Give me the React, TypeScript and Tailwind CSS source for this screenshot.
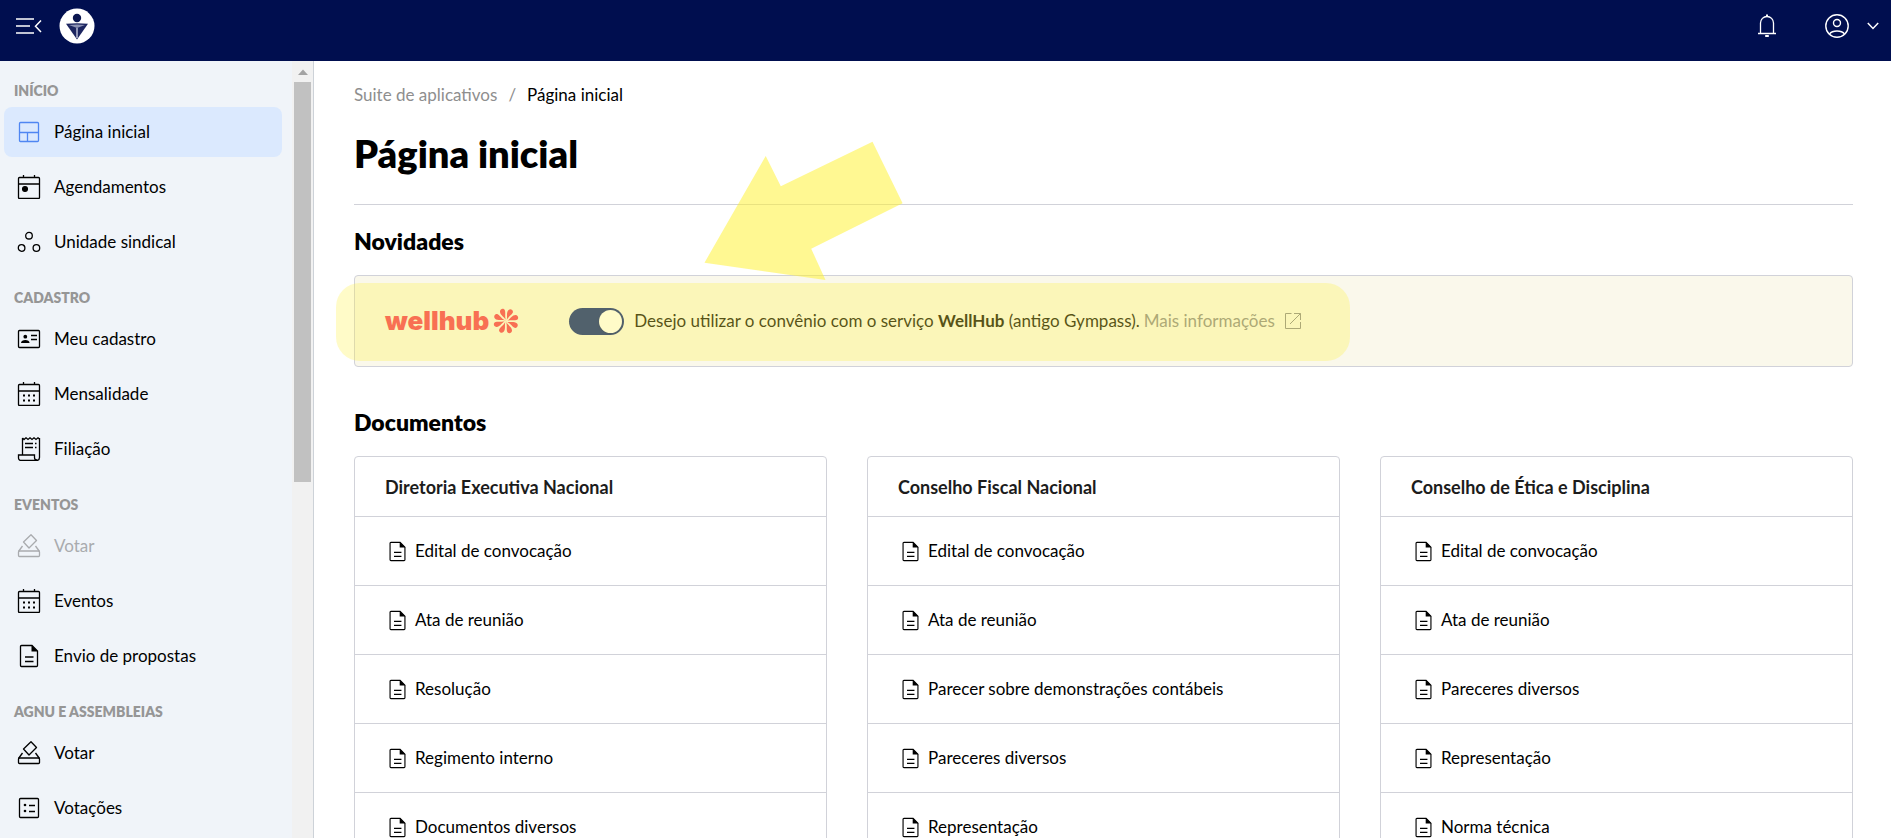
import { useState } from 'react';
import type { ReactNode } from 'react';

type IconName = 'home' | 'schedule' | 'unit' | 'idCard' | 'calendar' | 'receipt' | 'vote' | 'doc' | 'list';

const iconPaths: Record<IconName, ReactNode> = {
  home: (
    <>
      <rect x="2.5" y="2.5" width="19" height="19" rx="1" />
      <path d="M2.5 12.5h19M10.5 12.5v9" />
    </>
  ),
  schedule: (
    <>
      <rect x="1.5" y="2.5" width="21" height="21" rx="1" />
      <path d="M6.5 0v2.5M17.5 0v2.5M1.5 9h21" />
      <circle cx="8" cy="14" r="2.4" fill="currentColor" />
    </>
  ),
  unit: (
    <>
      <circle cx="12" cy="5.7" r="3.3" />
      <circle cx="4.6" cy="18" r="3.3" />
      <circle cx="19.4" cy="18" r="3.3" />
    </>
  ),
  idCard: (
    <>
      <rect x="1.5" y="3.5" width="21" height="17" rx="1" />
      <circle cx="8.3" cy="9.7" r="1.9" fill="currentColor" stroke="none" />
      <path d="M4 16c0-2 2-3 4.3-3s4.3 1 4.3 3z" fill="currentColor" stroke="none" />
      <path d="M14 8.5h6M14 12.5h6" />
    </>
  ),
  calendar: (
    <>
      <rect x="1.5" y="2.5" width="21" height="21" rx="1" />
      <path d="M6.5 0v2.5M17.5 0v2.5M1.5 9h21" />
      <path d="M6 13.5h2M11 13.5h2M16 13.5h2M6 18.5h2M11 18.5h2M16 18.5h2" strokeWidth="2" />
    </>
  ),
  receipt: (
    <>
      <path d="M5.5 18V1M22.5 1v19.5a3 3 0 0 1-3 3H4a2.5 2.5 0 0 1-2.5-2.5v-3h16v2.5a2.5 2.5 0 0 0 2.5 2.5" />
      <path d="M5.5 1l1.5 1.5L9 .8l2 1.7L13 .8l2 1.7L17 .8l2 1.7L21 .8l1.5 1.2" />
      <path d="M8 6.5h8M8 10.5h8M18 6.5h1.5M18 10.5h1.5" />
    </>
  ),
  vote: (
    <>
      <path d="M14 .8l5.5 5.7-7.5 7.5-5.5-6z" strokeLinejoin="round" />
      <rect x="1.5" y="17" width="21" height="5.5" rx="1" />
      <path d="M1.5 17.5l4-5.5M22.5 17.5l-4-5.5" />
    </>
  ),
  doc: (
    <>
      <path d="M15 1.5H4.5a1 1 0 0 0-1 1v19a1 1 0 0 0 1 1h15a1 1 0 0 0 1-1V7z" />
      <path d="M14.5 1v6.5H21z" fill="currentColor" stroke="none" />
      <path d="M8 13h8.5M8 17.5h8.5" />
    </>
  ),
  list: (
    <>
      <rect x="2.5" y="2.5" width="19" height="19" rx="1" />
      <path d="M12 9.5h6M12 15.5h6" />
      <circle cx="8" cy="9" r="1.3" fill="currentColor" stroke="none" />
      <circle cx="8" cy="15" r="1.3" fill="currentColor" stroke="none" />
    </>
  ),
};

function Icon({ name, className }: { name: IconName; className: string }) {
  return (
    <svg viewBox="0 0 24 24" fill="none" stroke="currentColor" strokeWidth="1.3" className={className} aria-hidden="true">
      {iconPaths[name]}
    </svg>
  );
}

type MenuItem = { label: string; icon: IconName; active?: boolean; disabled?: boolean };

const menu: { title: string; items: MenuItem[] }[] = [
  {
    title: 'INÍCIO',
    items: [
      { label: 'Página inicial', icon: 'home', active: true },
      { label: 'Agendamentos', icon: 'schedule' },
      { label: 'Unidade sindical', icon: 'unit' },
    ],
  },
  {
    title: 'CADASTRO',
    items: [
      { label: 'Meu cadastro', icon: 'idCard' },
      { label: 'Mensalidade', icon: 'calendar' },
      { label: 'Filiação', icon: 'receipt' },
    ],
  },
  {
    title: 'EVENTOS',
    items: [
      { label: 'Votar', icon: 'vote', disabled: true },
      { label: 'Eventos', icon: 'calendar' },
      { label: 'Envio de propostas', icon: 'doc' },
    ],
  },
  {
    title: 'AGNU E ASSEMBLEIAS',
    items: [
      { label: 'Votar', icon: 'vote' },
      { label: 'Votações', icon: 'list' },
    ],
  },
];

const documents = [
  {
    title: 'Diretoria Executiva Nacional',
    items: ['Edital de convocação', 'Ata de reunião', 'Resolução', 'Regimento interno', 'Documentos diversos'],
  },
  {
    title: 'Conselho Fiscal Nacional',
    items: ['Edital de convocação', 'Ata de reunião', 'Parecer sobre demonstrações contábeis', 'Pareceres diversos', 'Representação'],
  },
  {
    title: 'Conselho de Ética e Disciplina',
    items: ['Edital de convocação', 'Ata de reunião', 'Pareceres diversos', 'Representação', 'Norma técnica'],
  },
];

function Header() {
  return (
    <header className="flex h-[61px] shrink-0 items-start justify-between bg-[#000e4f] pt-2 pr-3 pl-4 text-white">
      <div className="flex items-center gap-4">
        <button type="button" aria-label="Menu" className="flex h-9 items-center">
          <svg width="27" height="18" viewBox="0 0 27 18" fill="none" stroke="currentColor" strokeWidth="1.5">
            <path d="M0 2h18M0 9h14M0 16h18M25 3.5L19.5 9.2l5.5 5.7" />
          </svg>
        </button>
        <a href="#" aria-label="Início">
          <svg width="36" height="36" viewBox="0 0 36 36">
            <circle cx="18" cy="18" r="17.5" fill="#fff" />
            <circle cx="18" cy="10" r="4.2" fill="#0b1650" />
            <path d="M7 15.8c7-.8 15-.8 22 0L18 31.5z" fill="#1c2560" />
            <path d="M10 17c5-.7 11-.7 16 0L18 20z" fill="#8b91b3" />
            <path d="M18 20v10" stroke="#dfe2f2" strokeWidth="1.2" />
          </svg>
        </a>
      </div>
      <div className="flex h-9 items-center">
        <button type="button" aria-label="Notificações" className="mr-12">
          <svg width="20" height="24" viewBox="0 0 20 24" fill="none" stroke="currentColor" strokeWidth="1.3">
            <path d="M3.5 19.5V9a6.5 6.5 0 0 1 13 0v10.5M1 19.5h18" />
            <path d="M10 .5v2M8.2 22h3.6" strokeWidth="2" />
          </svg>
        </button>
        <button type="button" aria-label="Minha conta" className="flex items-center gap-[18px]">
          <svg width="24" height="24" viewBox="0 0 24 24" fill="none" stroke="currentColor" strokeWidth="1.4">
            <circle cx="12" cy="12" r="11.2" />
            <circle cx="12" cy="9" r="3.5" />
            <path d="M4.5 20c1.5-2 4.5-3 7.5-3s6 1 7.5 3" />
          </svg>
          <svg width="12" height="8" viewBox="0 0 12 8" fill="none" stroke="currentColor" strokeWidth="1.5">
            <path d="M.8 1l5.2 5.5L11.2 1" />
          </svg>
        </button>
      </div>
    </header>
  );
}

function Sidebar() {
  return (
    <aside className="flex w-[314px] shrink-0 overflow-hidden border-r border-[#cdd2d8] bg-[#f0f4f9]">
      <nav className="flex-1 pt-[18px]">
        {menu.map((group) => (
          <div key={group.title} className="mb-[19px]">
            <h2 className="mb-1 pl-3.5 text-sm leading-6 font-extrabold text-[#969696]">{group.title}</h2>
            <ul className="space-y-[5px] pr-2.5 pl-1">
              {group.items.map((item) => (
                <li key={item.label}>
                  <a
                    href="#"
                    aria-disabled={item.disabled}
                    className={
                      item.active
                        ? 'flex h-[50px] items-center gap-[13px] rounded-lg bg-[#dbe9fe] px-[13px] text-[17px]'
                        : item.disabled
                          ? 'flex h-[50px] items-center gap-[13px] rounded-lg px-[13px] text-[17px] text-[#a9abae]'
                          : 'flex h-[50px] items-center gap-[13px] rounded-lg px-[13px] text-[17px]'
                    }
                  >
                    <Icon name={item.icon} className={item.active ? 'size-6 text-[#4f86f2]' : 'size-6'} />
                    {item.label}
                  </a>
                </li>
              ))}
            </ul>
          </div>
        ))}
      </nav>
      {/* Scrollbar */}
      <div className="flex w-[21px] flex-col items-center bg-[#f1f1f1] pt-2">
        <svg width="10" height="6" viewBox="0 0 10 6" className="mb-[7px] shrink-0">
          <path d="M5 .5L10 6H0z" fill="#a3a3a3" />
        </svg>
        <div className="h-[400px] w-[17px] bg-[#c1c1c1]" />
      </div>
    </aside>
  );
}

function WellhubLogo() {
  return (
    <div className="flex items-center gap-1 text-[#f53f5e]">
      <span className="font-[Inter,sans-serif] text-[26px] leading-6 font-black">wellhub</span>
      <svg width="26" height="26" viewBox="-13 -13 26 26" fill="currentColor" aria-hidden="true">
        {[0, 45, 90, 135, 180, 225, 270, 315].map((angle) => (
          <path
            key={angle}
            transform={`rotate(${angle})`}
            d="M.4.2C-.6-3.600-6.200-5.600-6-9.700c.2-2.800 4.200-3.500 5-.6C-.3-7.600-1.600-3.800.4.2z"
          />
        ))}
      </svg>
    </div>
  );
}

function News() {
  const [enabled, setEnabled] = useState(true);

  return (
    <section className="relative flex h-[92px] items-center rounded border border-[#d1d2d9] bg-[#faf8eb] px-[30px]">
      <WellhubLogo />
      <label className="ml-[50px] flex items-center gap-2.5 text-[17px] text-[#15150c]">
        <input
          type="checkbox"
          role="switch"
          checked={enabled}
          onChange={(e) => setEnabled(e.target.checked)}
          className="peer sr-only"
        />
        <span className="flex h-[27px] w-[55px] items-center rounded-full bg-gray-400 px-0.5 peer-checked:justify-end peer-checked:bg-[#0f2a80]">
          <span className="size-[23px] rounded-full bg-white shadow" />
        </span>
        <span>
          Desejo utilizar o convênio com o serviço <strong>WellHub</strong> (antigo Gympass).
        </span>
      </label>
      <a href="#" className="ml-1 flex items-center gap-2.5 text-[17px] text-[#8e8e8e]">
        Mais informações
        <svg width="16" height="16" viewBox="0 0 16 16" fill="none" stroke="currentColor">
          <path d="M6.5.5h-6v15h15V9M9 .5h6.500V7M15.500.5L5 11" />
        </svg>
      </a>
      {/* Highlighter over the message */}
      <div className="pointer-events-none absolute top-[7px] -left-[19px] h-[78px] w-[1014px] rounded-3xl bg-[#fff13b]/28" />
    </section>
  );
}

function Documents() {
  return (
    <div className="grid grid-cols-3 gap-10">
      {documents.map((doc) => (
        <section key={doc.title} className="rounded border border-[#d1d2d9]">
          <h3 className="flex h-[59px] items-center px-[30px] text-lg font-bold text-[#1c1c1c]">{doc.title}</h3>
          <ul>
            {doc.items.map((item) => (
              <li key={item} className="border-t border-[#d1d2d9]">
                <a href="#" className="flex h-[68px] items-center gap-[7px] px-8 text-[17px]">
                  <Icon name="doc" className="size-[21px]" />
                  {item}
                </a>
              </li>
            ))}
          </ul>
        </section>
      ))}
    </div>
  );
}

export default function App() {
  return (
    <div className="flex h-screen flex-col overflow-hidden bg-white font-[Lato,sans-serif] text-black">
      <Header />
      <div className="flex min-h-0 flex-1">
        <Sidebar />
        <main className="relative min-w-0 flex-1 overflow-hidden pt-5 pr-[38px] pl-10">
          <nav aria-label="Trilha" className="flex gap-[11px] text-[17px] leading-7">
            <a href="#" className="text-[#8e8e8e]">
              Suite de aplicativos
            </a>
            <span className="text-[#8e8e8e]">/</span>
            <span>Página inicial</span>
          </nav>
          <h1 className="mt-[22px] border-b border-[#d1d2d9] pb-[29px] text-[38px] leading-[44px] font-extrabold">Página inicial</h1>
          <h2 className="mt-5 mb-[18px] text-[23px] leading-8 font-extrabold">Novidades</h2>
          <News />
          <h2 className="mt-[39px] mb-[18px] text-[23px] leading-8 font-extrabold">Documentos</h2>
          <Documents />
          {/* Arrow pointing at the highlighted message */}
          <svg
            className="pointer-events-none absolute top-20 left-[390px]"
            width="200"
            height="140"
            viewBox="0 0 200 140"
            aria-hidden="true"
          >
            <path
              d="M168.5.7L198.6 62.3L107.2 107.7L121.5 139L.5 121.7L61.7 15L76.8 45.3z"
              fill="#fff22e"
              fillOpacity=".52"
            />
          </svg>
        </main>
      </div>
    </div>
  );
}
